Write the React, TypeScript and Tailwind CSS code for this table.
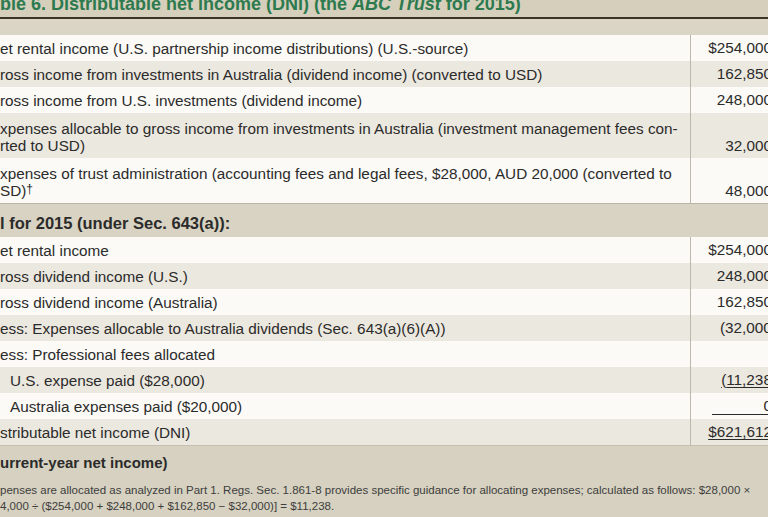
import React from 'react';

type Shade = 'white' | 'beige';

interface RowProps {
  label: React.ReactNode;
  value?: React.ReactNode;
  shade: Shade;
  indent?: boolean;
  tall?: boolean;
}

const Row: React.FC<RowProps> = ({ label, value, shade, indent, tall }) => {
  const bg = shade === 'white' ? 'bg-[#fbfaf6]' : 'bg-[#ebe8df]';
  return (
    <div className={`flex ${bg} ${tall ? 'h-[45px]' : 'h-[26px]'}`}>
      <div
        className={`flex-1 leading-[17px] whitespace-nowrap ${indent ? 'pl-[10px]' : 'pl-0'} ${
          tall ? 'pt-[7px]' : 'flex items-center'
        }`}
      >
        {label}
      </div>
      <div
        className={`w-[90px] border-l border-[#bdb8ab] flex justify-end pr-[8px] ${
          tall ? 'items-end pb-[4px] leading-[17px]' : 'items-center'
        }`}
      >
        {value}
      </div>
    </div>
  );
};

const Neg: React.FC<{ children: React.ReactNode }> = ({ children }) => (
  <span>
    ({children}
    <span className="-mr-[5px]">)</span>
  </span>
);

export default function App() {
  return (
    <div className="w-[768px] h-[517px] overflow-hidden bg-[#d6d1c0] font-['Liberation_Sans',Arial,sans-serif] text-[15.3px] text-[#2b2b2b]">
      <div className="w-[780px]">
        {/* title band, cut at the top */}
        <div className="h-[17px] overflow-hidden bg-[#d5cfbc]">
          <div className="-mt-[5px] text-[18px] leading-[18px] font-bold text-[#2d7a4f] whitespace-nowrap">
            ble 6. Distributable net income (DNI) (the <span className="italic">ABC Trust</span> for 2015)
          </div>
        </div>
        <div className="h-[2px] bg-[#3a3428]" />
        <div className="h-[16px] bg-[#dad5c5]" />

        <Row shade="white" label="et rental income (U.S. partnership income distributions) (U.S.-source)" value="$254,000" />
        <Row shade="beige" label="ross income from investments in Australia (dividend income) (converted to USD)" value="162,850" />
        <Row shade="white" label="ross income from U.S. investments (dividend income)" value="248,000" />
        <Row
          shade="beige"
          tall
          label={
            <>
              <div>xpenses allocable to gross income from investments in Australia (investment management fees con-</div>
              <div>rted to USD)</div>
            </>
          }
          value="32,000"
        />
        <Row
          shade="white"
          tall
          label={
            <>
              <div>xpenses of trust administration (accounting fees and legal fees, $28,000, AUD 20,000 (converted to</div>
              <div>
                SD)<span className="relative -top-[3px] text-[12px]">†</span>
              </div>
            </>
          }
          value="48,000"
        />

        <div className="h-[34px] border-t border-[#b9b4a6] bg-[#d8d3c2] flex items-center pt-[6px] font-bold text-[16.5px]">
          l for 2015 (under Sec. 643(a)):
        </div>

        <Row shade="white" label="et rental income" value="$254,000" />
        <Row shade="beige" label="ross dividend income (U.S.)" value="248,000" />
        <Row shade="white" label="ross dividend income (Australia)" value="162,850" />
        <Row shade="beige" label="ess: Expenses allocable to Australia dividends (Sec. 643(a)(6)(A))" value={<Neg>32,000</Neg>} />
        <Row shade="white" label="ess: Professional fees allocated" />
        <Row shade="beige" indent label="U.S. expense paid ($28,000)" value={<span className="underline underline-offset-2"><Neg>11,238</Neg></span>} />
        <Row
          shade="white"
          indent
          label="Australia expenses paid ($20,000)"
          value={<span className="inline-block w-[60px] text-right border-b border-[#2b2b2b] leading-[16px]">0</span>}
        />
        <Row shade="beige" label="stributable net income (DNI)" value={<span className="underline underline-offset-2">$621,612</span>} />

        <div className="border-t border-[#c4bfb0] bg-[#d6d1c0] pt-[8px]">
          <div className="font-bold text-[15px] leading-[18px]">urrent-year net income)</div>
          <div className="mt-[10px] text-[11.5px] leading-[16px] text-[#3d3d3d]">
            <div className="whitespace-nowrap">
              penses are allocated as analyzed in Part 1. Regs. Sec. 1.861-8 provides specific guidance for allocating expenses; calculated as follows: $28,000 ×
            </div>
            <div className="whitespace-nowrap">4,000 ÷ ($254,000 + $248,000 + $162,850 − $32,000)] = $11,238.</div>
          </div>
        </div>
      </div>
    </div>
  );
}
